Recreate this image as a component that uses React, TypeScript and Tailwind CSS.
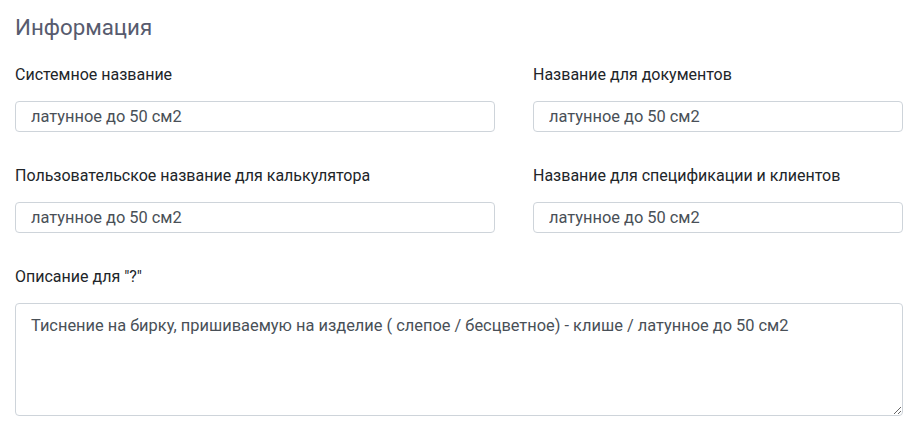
import React from "react";

const font = { fontFamily: "Roboto, 'Noto Sans', sans-serif" };

function Field({ label, value }: { label: string; value: string }) {
  return (
    <div className="flex flex-col">
      <label className="text-[16px] leading-[20px] text-[#212529] h-[20px]">{label}</label>
      <input
        readOnly
        value={value}
        className="mt-[16px] h-[31px] rounded-[4px] border border-[#ced4da] bg-white px-[15px] text-[16.4px] text-[#495057] outline-none"
      />
    </div>
  );
}

export default function App() {
  return (
    <div className="w-[915px] h-[428px] bg-white px-[15px] pt-[12px]" style={font}>
      <h2 className="text-[22.3px] leading-[30px] text-[#575b6e]">Информация</h2>

      <div className="mt-[23px] grid grid-cols-[480px_370px] gap-x-[38px] gap-y-[34px]">
        <Field label="Системное название" value="латунное до 50 см2" />
        <Field label="Название для документов" value="латунное до 50 см2" />
        <Field label="Пользовательское название для калькулятора" value="латунное до 50 см2" />
        <Field label="Название для спецификации и клиентов" value="латунное до 50 см2" />
      </div>

      <div className="mt-[34px] flex flex-col w-[888px]">
        <label className="text-[16px] leading-[20px] text-[#212529] h-[20px]">Описание для "?"</label>
        <textarea
          readOnly
          value="Тиснение на бирку, пришиваемую на изделие ( слепое / бесцветное) - клише / латунное до 50 см2"
          className="mt-[16px] h-[113px] rounded-[4px] border border-[#ced4da] bg-white px-[15px] py-[11px] text-[16.4px] leading-[21px] text-[#495057] outline-none"
        />
      </div>
    </div>
  );
}
